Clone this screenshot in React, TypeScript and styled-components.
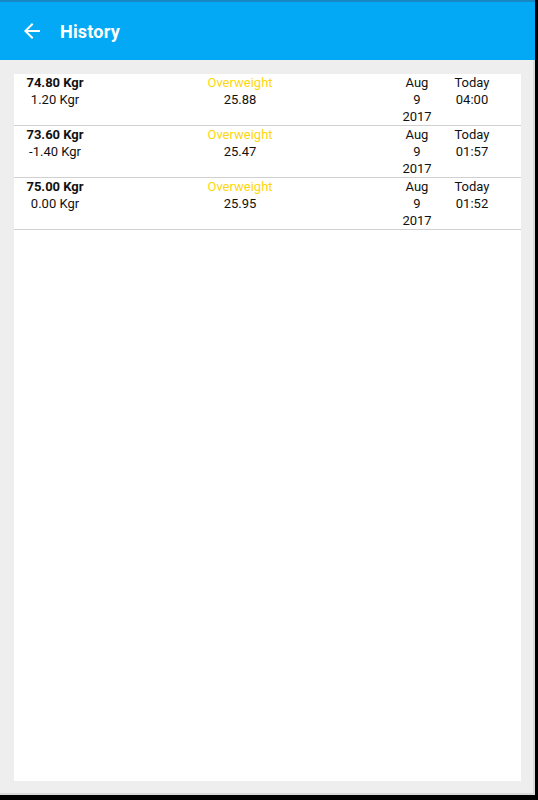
import React from 'react';
import styled, { createGlobalStyle } from 'styled-components';

const GlobalStyle = createGlobalStyle`
  html, body {
    margin: 0;
    padding: 0;
    background: #000000;
  }
  * {
    box-sizing: border-box;
  }
`;

const Screen = styled.div`
  display: flex;
  flex-direction: column;
  width: 535px;
  height: 795px;
  background: #EEEEEE;
  font-family: Roboto, 'Noto Sans', sans-serif;
`;

const AppBar = styled.header`
  display: flex;
  align-items: center;
  height: 60px;
  padding-left: 20px;
  background: #03A9F4;
  border-top: 2px solid #1888C4;
  color: #FFFFFF;
`;

const BackButton = styled.button`
  display: flex;
  align-items: center;
  justify-content: center;
  width: 24px;
  height: 24px;
  padding: 0;
  margin-right: 16px;
  border: none;
  background: transparent;
  color: #FFFFFF;
`;

const Title = styled.h1`
  margin: 0;
  font-size: 18px;
  font-weight: 700;
  letter-spacing: 0.2px;
`;

const Content = styled.main`
  flex: 1;
  display: flex;
  padding: 14px 12px 12px 14px;
  border-right: 2px solid #DADADA;
  border-bottom: 2px solid #DADADA;
`;

const Card = styled.section`
  flex: 1;
  background: #FFFFFF;
`;

const Row = styled.div`
  display: grid;
  grid-template-columns: 82px 288px 66px 44px 1fr;
  height: 52px;
  border-bottom: 1px solid #D0D0D0;
  font-size: 13px;
  line-height: 17px;
  color: #111111;
`;

const Cell = styled.div`
  display: flex;
  flex-direction: column;
  align-items: center;
  white-space: nowrap;
`;

const Weight = styled.span`
  font-weight: 700;
`;

const Status = styled.span`
  color: #FDD60E;
`;

interface Entry {
  weight: string;
  diff: string;
  bmi: string;
  time: string;
}

const entries: Entry[] = [
  { weight: '74.80 Kgr', diff: '1.20 Kgr', bmi: '25.88', time: '04:00' },
  { weight: '73.60 Kgr', diff: '-1.40 Kgr', bmi: '25.47', time: '01:57' },
  { weight: '75.00 Kgr', diff: '0.00 Kgr', bmi: '25.95', time: '01:52' },
];

const BackArrow = () => (
  <svg width="24" height="24" viewBox="0 0 24 24" fill="currentColor">
    <path d="M20 11H7.83l5.59-5.59L12 4l-8 8 8 8 1.41-1.41L7.83 13H20v-2z" />
  </svg>
);

export default function App() {
  return (
    <>
      <GlobalStyle />
      <Screen>
        <AppBar>
          <BackButton aria-label="Back">
            <BackArrow />
          </BackButton>
          <Title>History</Title>
        </AppBar>
        <Content>
          <Card>
            {entries.map((e) => (
              <Row key={e.time}>
                <Cell>
                  <Weight>{e.weight}</Weight>
                  <span>{e.diff}</span>
                </Cell>
                <Cell>
                  <Status>Overweight</Status>
                  <span>{e.bmi}</span>
                </Cell>
                <Cell>
                  <span>Aug</span>
                  <span>9</span>
                  <span>2017</span>
                </Cell>
                <Cell>
                  <span>Today</span>
                  <span>{e.time}</span>
                </Cell>
              </Row>
            ))}
          </Card>
        </Content>
      </Screen>
    </>
  );
}
